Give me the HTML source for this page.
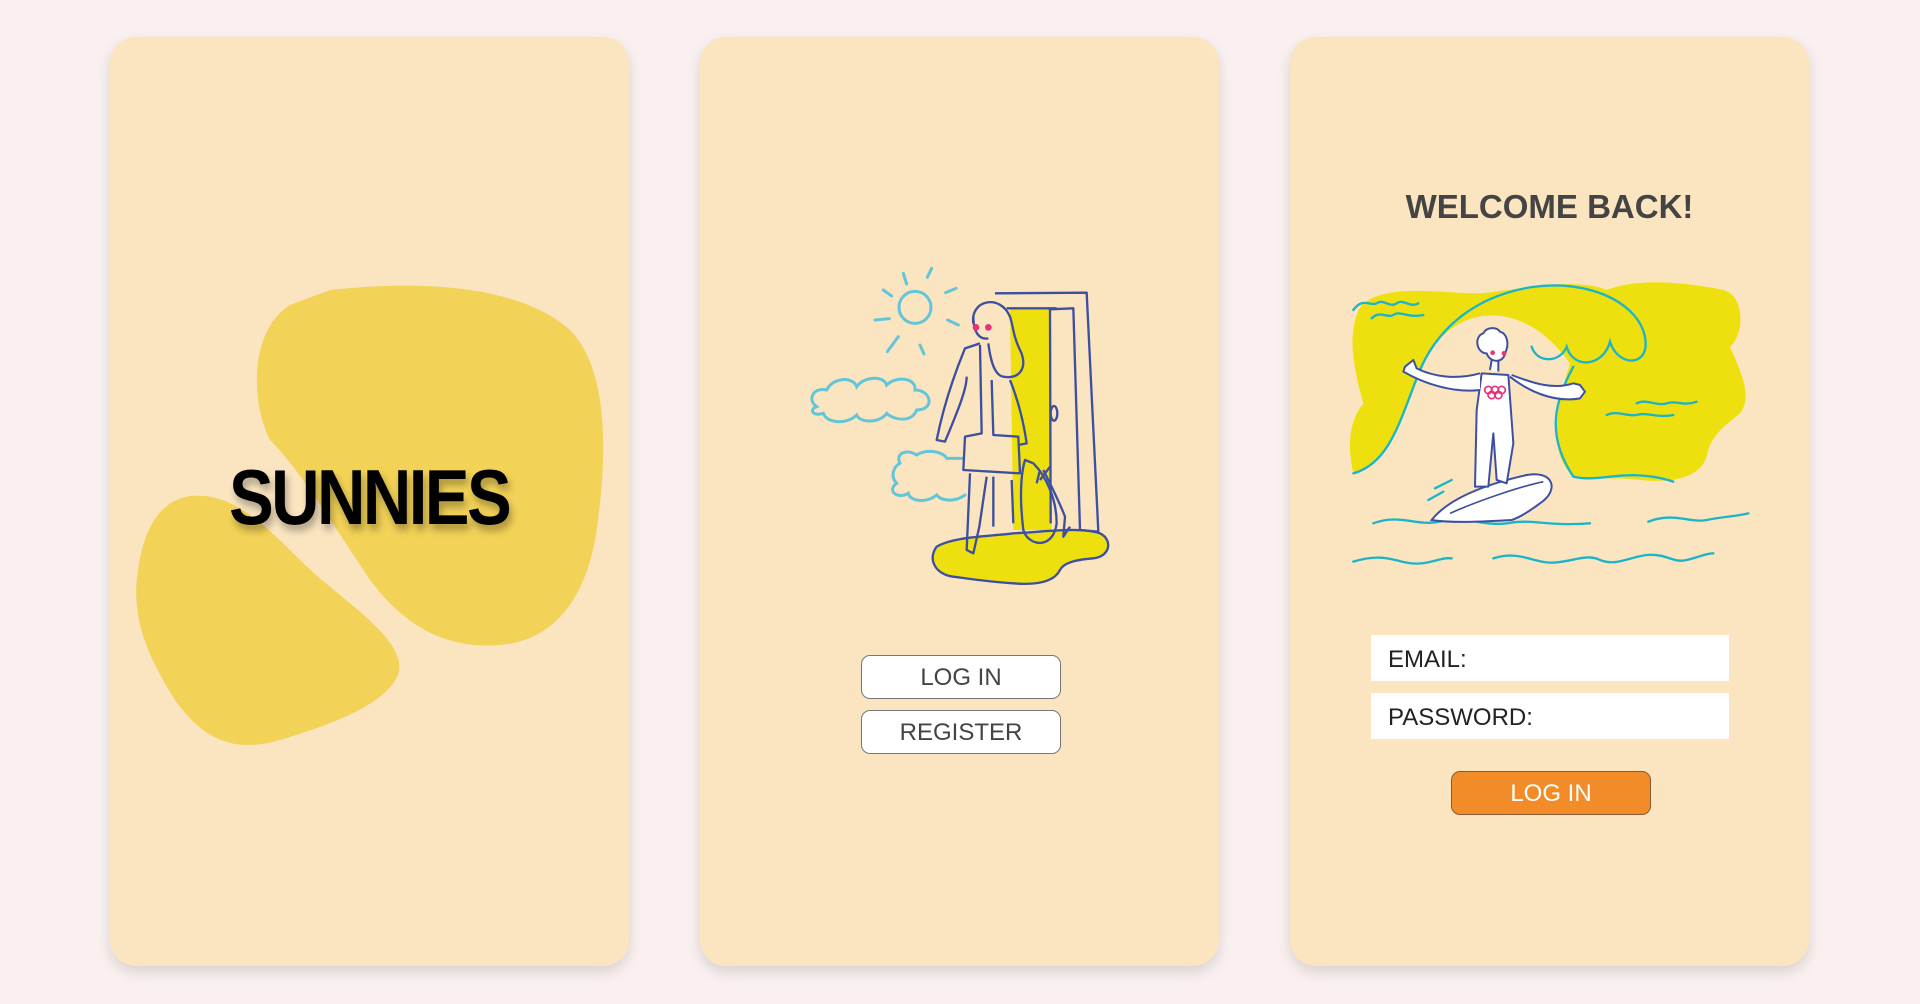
<!DOCTYPE html>
<html><head><meta charset="utf-8"><style>
html,body{margin:0;padding:0}
body{width:1920px;height:1004px;background:#f9f0ef;position:relative;overflow:hidden;font-family:"Liberation Sans",sans-serif}
.card{position:absolute;top:37px;width:519px;height:929px;background:#fae5c0;border-radius:26px;box-shadow:0 6px 14px rgba(0,0,0,0.13)}
.abs{position:absolute}
.btn{position:absolute;box-sizing:border-box;border:1px solid #777;border-radius:9px;background:#fff;color:#444;font-size:24px;text-align:center;line-height:44px}
.field{position:absolute;background:#fff;color:#222;font-size:24px;box-sizing:border-box;padding-left:17px;line-height:49px}
</style></head><body>
<div class="card" style="left:110px"></div>
<div class="card" style="left:700px"></div>
<div class="card" style="left:1290px"></div>

<svg class="abs" style="left:0;top:0" width="1920" height="1004">
<path d="M330 290 C420 280 520 285 570 330 C610 370 606 460 598 520 C590 590 560 640 500 645 C440 650 400 620 370 580 C330 520 300 470 270 440 C250 400 250 330 290 305 Z" fill="#f2d257"/>
<path d="M190 496 C230 492 260 520 300 560 C340 600 410 640 398 675 C385 705 330 725 280 740 C230 755 200 735 175 700 C150 660 130 620 138 570 C145 520 165 500 190 496 Z" fill="#f2d257"/>
</svg>
<div class="abs" style="left:208px;top:455px;width:300px;text-align:center;font-size:78px;font-weight:bold;color:#000;letter-spacing:-3px;transform:scaleX(0.86);text-shadow:3px 6px 8px rgba(0,0,0,0.3);line-height:84px">SUNNIES</div>

<!-- card2 illustration -->
<svg class="abs" style="left:780px;top:250px" width="360" height="340" viewBox="0 0 1080 1020">
<g fill="none" stroke="#63c5d9" stroke-width="9" stroke-linecap="round">
<circle cx="405" cy="172" r="48"/>
<path d="M370 70 L380 102 M455 55 L442 82 M310 120 L335 138 M497 128 L528 115 M285 210 L328 206 M503 210 L535 225 M355 260 L322 305 M420 285 L432 312"/>
<path d="M110 470 C80 450 100 410 140 420 C160 380 220 380 230 410 C250 380 310 375 320 405 C350 375 410 385 405 420 C455 420 465 480 410 480 C395 520 340 510 320 490 C300 520 240 520 230 495 C200 525 140 520 130 490 C100 500 85 480 110 470 Z"/>
<path d="M360 640 C345 610 380 595 410 615 C440 595 490 605 500 625 L545 625 M555 735 C520 760 480 750 470 735 C440 760 390 755 385 730 C350 750 320 720 350 700 C330 680 340 650 360 640"/>
</g>
<path d="M690 175 L810 175 L815 840 L700 840 Z" fill="#eee00e"/>
<path d="M470 890 C520 860 620 860 700 850 C800 845 900 830 960 850 C1000 870 990 920 940 925 C880 930 850 940 840 960 C820 1000 760 1005 700 1000 C620 995 560 985 520 980 C470 975 440 930 470 890 Z" fill="#eee00e" stroke="#3d4fa0" stroke-width="7"/>
<g fill="none" stroke="#3d4fa0" stroke-width="7" stroke-linejoin="round">
<path d="M645 130 L920 128 L955 845 L900 840 L880 175 L810 178 L812 820"/>
<path d="M680 175 L830 175"/>
<ellipse cx="822" cy="490" rx="10" ry="22"/>
<path d="M580 220 C570 150 660 130 690 200 C700 230 700 260 720 300 C745 350 720 390 670 380 C640 375 630 320 625 280"/>
<path d="M580 200 C580 250 600 270 625 265"/>
<path d="M600 280 L555 295 C520 380 490 470 470 570 L495 575 C530 490 560 420 560 380"/>
<path d="M600 285 L605 550 L555 560 L550 660 L720 670 L715 560 L640 555 L635 390 M690 390 C710 440 730 510 740 580 L715 585"/>
<path d="M570 670 L560 900 L580 910 L598 830 L620 680 M640 680 L640 830 M695 690 L700 820"/>
<path d="M735 630 C720 680 720 760 730 840 C745 890 820 900 830 820 C830 750 800 680 760 640 Z M790 660 C810 700 840 760 855 800 L850 860 L870 830"/>
<path d="M780 690 L810 650 M770 700 L780 660"/>
</g>
<circle cx="588" cy="232" r="10" fill="#e8317a"/><circle cx="625" cy="232" r="10" fill="#e8317a"/>
</svg>
<div class="btn" style="left:861px;top:655px;width:200px;height:44px">LOG IN</div>
<div class="btn" style="left:861px;top:710px;width:200px;height:44px">REGISTER</div>

<!-- card3 -->
<div class="abs" style="left:1290px;top:188px;width:519px;text-align:center;font-size:33px;font-weight:bold;color:#444">WELCOME BACK!</div>
<svg class="abs" style="left:1340px;top:270px" width="420" height="310" viewBox="0 0 1260 930">
<path d="M70 100 C150 40 300 70 420 70 C480 65 560 50 620 45 C680 40 760 40 800 60 C900 20 1050 40 1150 60 C1220 80 1210 200 1170 230 C1200 300 1240 380 1200 430 C1150 470 1110 500 1100 560 C1080 620 1010 640 900 630 C820 620 760 630 700 620 C640 560 630 470 690 280 C550 80 330 90 240 300 C180 450 160 570 40 610 C20 520 30 450 70 400 C50 330 30 240 40 180 C45 140 55 115 70 100 Z" fill="#eee00e"/>
<g fill="none" stroke="#1bb4c9" stroke-width="7" stroke-linecap="round">
<path d="M40 610 C150 580 180 450 240 300 C330 90 550 30 700 50 C850 70 930 160 915 240 C900 290 830 280 810 215 C790 290 700 300 680 230 C660 280 590 280 575 230"/>
<path d="M700 290 C640 400 620 500 700 620 C780 640 860 590 1000 635"/>
<path d="M40 120 C70 80 90 110 110 100 C130 85 150 115 170 100 C190 85 210 115 235 100 M95 145 C120 120 140 145 160 135 C180 120 200 145 250 135"/>
<path d="M890 400 C920 385 950 410 980 400 C1010 390 1030 410 1070 395 M800 435 C830 420 860 440 890 435 C920 425 950 445 1000 435"/>
<path d="M100 760 C180 730 230 770 300 755 C380 735 430 770 500 760 C580 745 620 770 750 760 M925 755 C1000 725 1050 760 1100 750 C1150 740 1180 740 1225 730"/>
<path d="M40 875 C120 850 160 870 200 878 C260 890 300 860 335 865 M460 865 C540 840 580 880 640 878 C700 875 740 850 780 870 C830 890 870 860 920 855 C980 850 1000 880 1040 870 C1080 860 1100 850 1120 850"/>
<path d="M285 655 L335 630 M265 690 L310 665"/>
</g>
<path d="M275 750 C330 680 450 640 560 615 C640 600 660 660 600 700 C560 730 530 745 515 750 C430 755 340 760 275 750 Z" fill="#fff" stroke="#3d4fa0" stroke-width="6"/>
<path d="M330 730 C420 690 540 650 610 635" stroke="#3d4fa0" stroke-width="5" fill="none"/>
<g fill="#fff" stroke="#3d4fa0" stroke-width="6" stroke-linejoin="round">
<path d="M410 420 L425 310 L505 315 L520 520 L500 640 L470 630 L460 490 L445 650 L405 650 Z"/>
<path d="M420 310 C350 330 280 320 230 295 L220 270 L195 290 L190 305 C250 340 340 370 420 360 M510 320 C560 360 640 400 720 385 L735 365 L720 345 L700 340 C640 360 580 340 515 315"/>
<path d="M450 300 L455 270 L475 270 L475 305"/>
<path d="M430 190 C400 200 410 250 440 250 C450 280 490 280 495 250 C510 220 500 190 480 185 C470 170 440 170 430 190 Z"/>
</g>
<g fill="none" stroke="#e8317a" stroke-width="5"><circle cx="445" cy="360" r="11"/><circle cx="465" cy="360" r="11"/><circle cx="485" cy="360" r="11"/><circle cx="455" cy="375" r="11"/><circle cx="475" cy="375" r="11"/></g>
<circle cx="458" cy="248" r="7" fill="#e8317a"/><circle cx="492" cy="250" r="7" fill="#e8317a"/>
</svg>
<div class="field" style="left:1371px;top:635px;width:358px;height:46px">EMAIL:</div>
<div class="field" style="left:1371px;top:693px;width:358px;height:46px">PASSWORD:</div>
<div class="btn" style="left:1451px;top:771px;width:200px;height:44px;background:#f28c28;color:#fff;border-color:#8a5a30">LOG IN</div>
</body></html>
